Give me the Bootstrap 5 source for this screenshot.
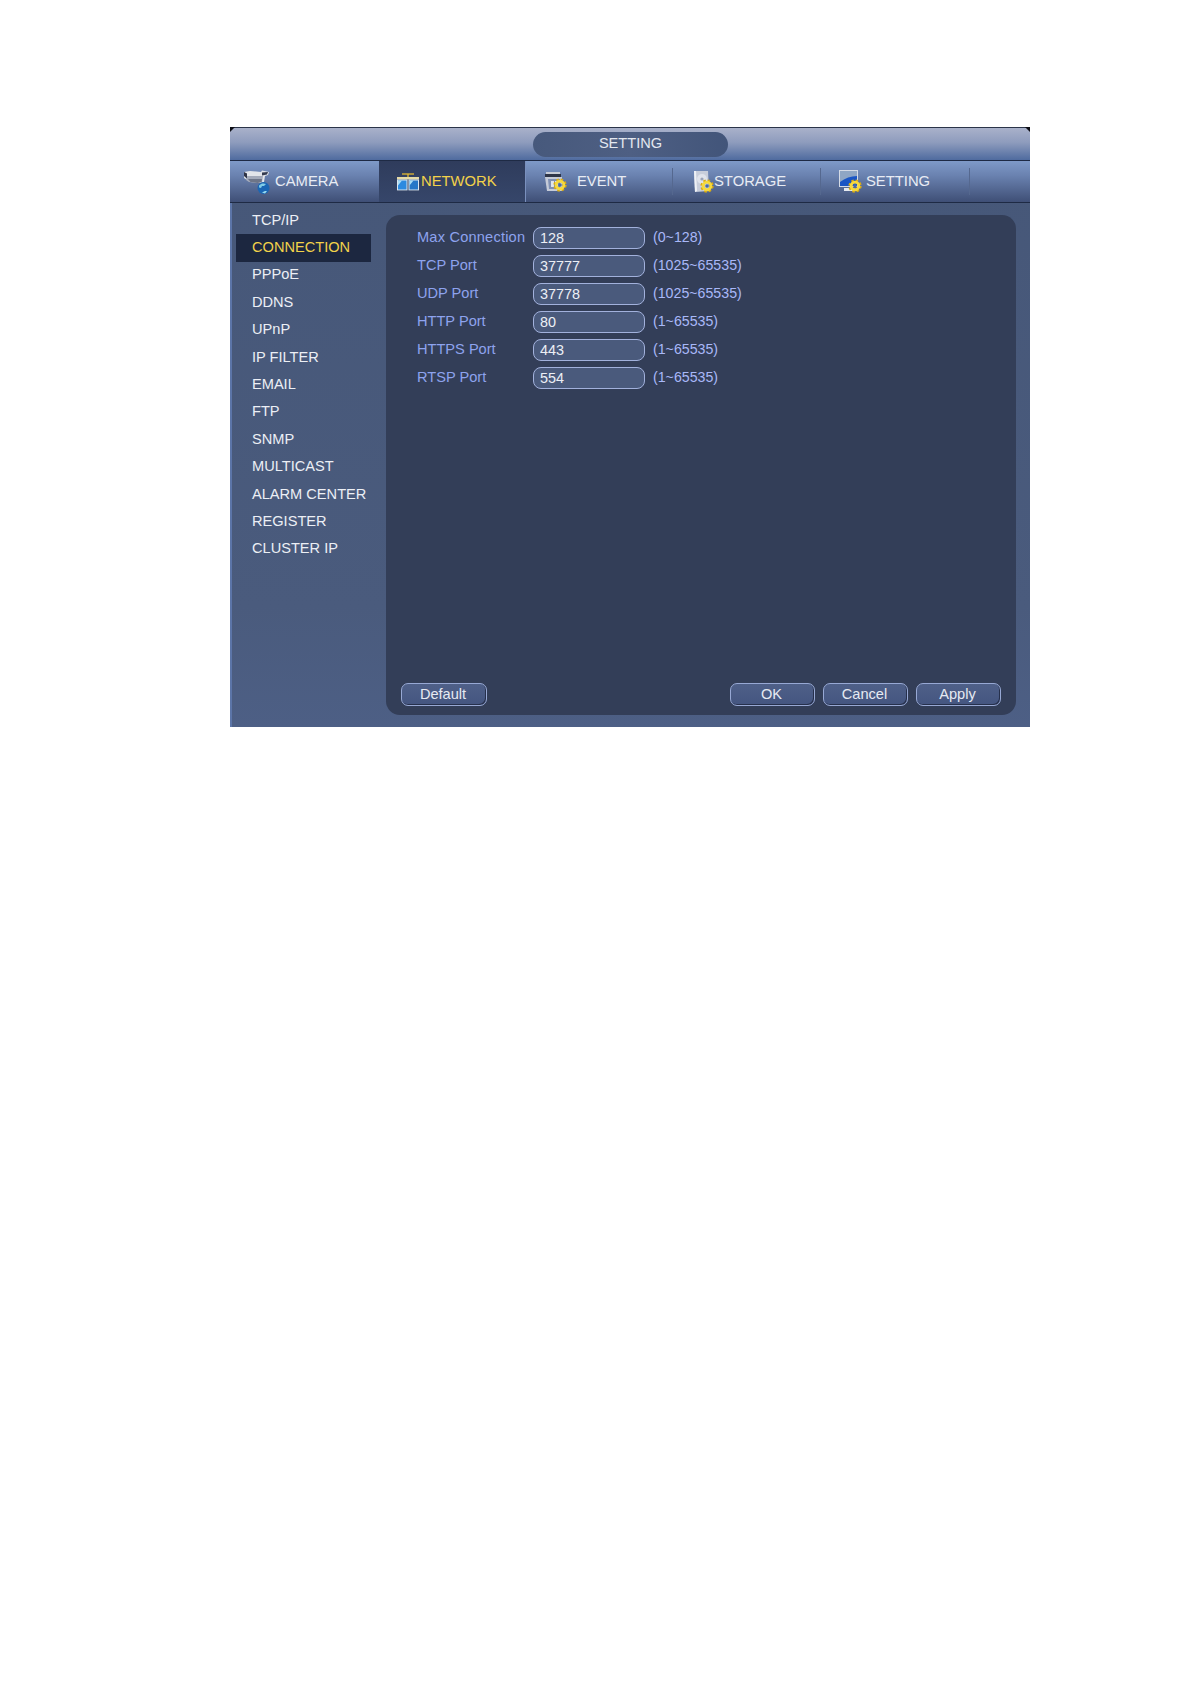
<!DOCTYPE html>
<html lang="en">
<head>
<meta charset="utf-8">
<title>SETTING</title>
<link href="https://cdn.jsdelivr.net/npm/bootstrap@5.3.0/dist/css/bootstrap.min.css" rel="stylesheet">
<style>
html,body{background:#fff;height:100%}
body{font-family:"Liberation Sans",Arial,sans-serif;font-size:14.6px}
.dvr-window{width:800px;margin:127px 0 0 230px;background:linear-gradient(#465778,#4a5b7d 80%,#4d5f85);border-left:2px solid #5c75a8;position:relative}
.dvr-window::before,.dvr-window::after{content:"";position:absolute;top:0;width:5px;height:5px;background:#0d0d14}
.dvr-window::before{left:-2px;clip-path:polygon(0 0,100% 0,0 100%)}
.dvr-window::after{right:0;clip-path:polygon(0 0,100% 0,100% 100%)}
.dvr-head{height:34px;margin-left:-2px;padding-top:4px;border-top:1px solid #2b3448;border-bottom:1px solid #1e2a44;background:linear-gradient(#a9b1ca,#8e9cbd 45%,#4f6b9f)}
.dvr-pill{width:195px;height:25px;border-radius:13px;background:linear-gradient(90deg,#47597c,#4e5f83 50%,#42557a);color:#e4e8f0;line-height:23px;margin-left:303px;text-align:center}
.dvr-tabs{height:42px;margin-left:-2px;border-bottom:1px solid #1e2a44;background:linear-gradient(#7f9ac8,#6a82b0 35%,#3f4f76)}
.dvr-tab{height:41px;color:#e8ecf4;text-decoration:none;white-space:nowrap;font-size:14.8px}
.dvr-tab::after{content:"";width:1px;height:27px;margin-left:auto;background:#55688f}
.dvr-tab.dvr-on{background:linear-gradient(#2f3c5c,#36466a);color:#f2d24a;border-right:1px solid #7a90bd}
.dvr-tab.dvr-on::after,.dvr-tab.tab-a::after{display:none}
.tab-a{width:149px;padding-left:13px;gap:5px}
.tab-b{width:147px;padding-left:18px;gap:2px}
.tab-c{width:147px;padding-left:18px;gap:10px}
.tab-d{width:148px;padding-left:20px;gap:0}
.tab-e{width:149px;padding-left:18px;gap:4px}
.dvr-side{width:154px;padding:3.6px 0 0 4px;flex:none;font-size:14.6px}
.dvr-link{display:block;height:27.4px;width:135px;line-height:27.4px;padding-left:16px;color:#eceff5;text-decoration:none;white-space:nowrap}
.dvr-link.dvr-on{background:#1c2740;color:#f2d24a;height:28px;margin-bottom:-.6px}
.dvr-body{height:524px}
.dvr-panel{width:630px;margin:12px 0;height:500px;background:#333e58;border-radius:14px;padding:12px 15px 9px}
.dvr-rows{gap:6.1px;padding-left:16px}
.dvr-label{width:116px;color:#8ea3ee;white-space:nowrap;line-height:20px;margin-top:-3px}
.dvr-wide{letter-spacing:.2px}
.dvr-input.form-control{width:112px;height:22px;min-height:0;padding:0 6px 1px;border:1.5px solid #a2b1dc;border-radius:8px;background:#4a5a7c;color:#eceff5;font-size:14.4px;line-height:18px;box-shadow:none}
.dvr-range{margin-left:8px;margin-top:-3px;color:#a9b8f8;white-space:nowrap;line-height:20px;font-size:14.2px}
.dvr-btn.btn{width:86px;height:23px;padding:0 2px 2px 0;border:1.5px solid #97a8d4;border-radius:7px;background:linear-gradient(#4f6088,#445580);color:#e6eaf2;font-size:14.6px;line-height:18px;box-shadow:inset -1px -1px 0 #26304c}
.dvr-foot{gap:8px}
.dvr-foot .dvr-btn.btn{width:85px}
</style>
</head>
<body>
<svg width="0" height="0" class="position-absolute">
  <defs>
    <symbol id="gear" viewBox="0 0 16 16">
      <circle cx="8" cy="8" r="5.8" fill="none" stroke="#d9ab14" stroke-width="3.6" stroke-dasharray="2.6 1.95"/>
      <circle cx="8" cy="8" r="4.4" fill="none" stroke="#f6d93c" stroke-width="3.2"/>
      <circle cx="8" cy="8" r="2" fill="#4a6aa0"/>
    </symbol>
  </defs>
</svg>
<main class="dvr-window">
  <header class="dvr-head"><div class="dvr-pill">SETTING</div></header>
  <nav class="dvr-tabs d-flex">
    <a href="#" class="dvr-tab tab-a d-flex align-items-center">
      <svg width="27" height="24" viewBox="0 0 27 24"><path d="M1 2l6-1 11 1 1-1.500 7 1.500-1 3-3 1-1 6-4 1-10-1-6-4z" fill="#e2e5ea"/><path d="M4 6l16 0-1 6-4 1-9-1-3-2z" fill="#a3aaba"/><path d="M5 9l14 0-.5 3-4 1-7-1z" fill="#6d7588"/><path d="M1 2l3 1.500v5L1 6z" fill="#2f3446"/><path d="M19 2.500l6-.5-1 2.500-5 1z" fill="#333a4e"/><circle cx="20.500" cy="18" r="6" fill="#1a66b4"/><path d="M16 15.500c2-2.500 5-2.500 7-1.500l-2 2-2 0-1 2-2-.5z" fill="#7fcbe6"/><path d="M19 22.500l3-1.500 2 0-2 2.500z" fill="#9adcf0"/></svg>
      <span>CAMERA</span>
    </a>
    <a href="#" class="dvr-tab dvr-on tab-b d-flex align-items-center">
      <svg width="22" height="18" viewBox="0 0 22 18"><path d="M5 1h12" stroke="#e2b830" stroke-width="1.3"/><path d="M11 1v4" stroke="#e2b830" stroke-width="1.3"/><path d="M0 4h22v2.400H0z" fill="#e6dba6"/><path d="M0 6.400h10.500v11H0z" fill="#dbe6ee"/><path d="M11.500 6.400H22v11H11.500z" fill="#dbe6ee"/><path d="M1 7.500h8.500v9H1z" fill="#2c8ae0"/><path d="M12.500 7.500H21v9h-8.500z" fill="#2677c8"/><path d="M1 7.500h4l-4 5zM12.500 7.500h4l-4 5z" fill="#a8dcf5"/></svg>
      <span>NETWORK</span>
    </a>
    <a href="#" class="dvr-tab tab-c d-flex align-items-center">
      <svg width="23" height="21" viewBox="0 0 23 21"><path d="M2 1h14v2H2z" fill="#c7ccd6"/><path d="M1 3h16v3H1z" fill="#2e3548"/><path d="M1 6h17v14H3z" fill="#c5cbd8"/><path d="M4 8h12v10H5z" fill="#7f90b4"/><path d="M7 10h3v6H7zM11 10h3v6h-3z" fill="#dfe4ec"/><use href="#gear" x="9" y="7" width="14" height="14"/></svg>
      <span>EVENT</span>
    </a>
    <a href="#" class="dvr-tab tab-d d-flex align-items-center">
      <svg width="21" height="23" viewBox="0 0 21 23"><path d="M1 1h14l1 20-14 1z" fill="#c8cedb"/><path d="M1 1l2 0 1 20-2 1z" fill="#eef1f6"/><circle cx="9" cy="9" r="5" fill="#dfe3ec"/><circle cx="9" cy="9" r="1.600" fill="#9aa4b8"/><use href="#gear" x="7" y="9" width="14" height="14"/></svg>
      <span>STORAGE</span>
    </a>
    <a href="#" class="dvr-tab tab-e d-flex align-items-center">
      <svg width="23" height="23" viewBox="0 0 23 23"><path d="M0 0h19v17H0z" fill="#d5dbe6"/><path d="M1 1h17v15H1z" fill="#1a55c4"/><path d="M1 1h17v5C12 6 6 8 1 12z" fill="#8fa6c4"/><path d="M5 18h10l2 3H5z" fill="#e6eaf0"/><use href="#gear" x="9" y="9" width="14" height="14"/></svg>
      <span>SETTING</span>
    </a>
  </nav>
  <div class="dvr-body d-flex">
    <aside class="dvr-side">
      <a href="#" class="dvr-link">TCP/IP</a>
      <a href="#" class="dvr-link dvr-on">CONNECTION</a>
      <a href="#" class="dvr-link">PPPoE</a>
      <a href="#" class="dvr-link">DDNS</a>
      <a href="#" class="dvr-link">UPnP</a>
      <a href="#" class="dvr-link">IP FILTER</a>
      <a href="#" class="dvr-link">EMAIL</a>
      <a href="#" class="dvr-link">FTP</a>
      <a href="#" class="dvr-link">SNMP</a>
      <a href="#" class="dvr-link">MULTICAST</a>
      <a href="#" class="dvr-link">ALARM CENTER</a>
      <a href="#" class="dvr-link">REGISTER</a>
      <a href="#" class="dvr-link">CLUSTER IP</a>
    </aside>
    <section class="dvr-panel d-flex flex-column justify-content-between">
      <div class="dvr-rows d-flex flex-column">
        <div class="d-flex align-items-center"><label class="dvr-label dvr-wide">Max Connection</label><input class="dvr-input form-control" value="128"><span class="dvr-range">(0~128)</span></div>
        <div class="d-flex align-items-center"><label class="dvr-label">TCP Port</label><input class="dvr-input form-control" value="37777"><span class="dvr-range">(1025~65535)</span></div>
        <div class="d-flex align-items-center"><label class="dvr-label">UDP Port</label><input class="dvr-input form-control" value="37778"><span class="dvr-range">(1025~65535)</span></div>
        <div class="d-flex align-items-center"><label class="dvr-label">HTTP Port</label><input class="dvr-input form-control" value="80"><span class="dvr-range">(1~65535)</span></div>
        <div class="d-flex align-items-center"><label class="dvr-label">HTTPS Port</label><input class="dvr-input form-control" value="443"><span class="dvr-range">(1~65535)</span></div>
        <div class="d-flex align-items-center"><label class="dvr-label">RTSP Port</label><input class="dvr-input form-control" value="554"><span class="dvr-range">(1~65535)</span></div>
      </div>
      <div class="d-flex justify-content-between">
        <button type="button" class="dvr-btn btn">Default</button>
        <div class="dvr-foot d-flex">
          <button type="button" class="dvr-btn btn">OK</button>
          <button type="button" class="dvr-btn btn">Cancel</button>
          <button type="button" class="dvr-btn btn">Apply</button>
        </div>
      </div>
    </section>
  </div>
</main>
<script src="https://cdn.jsdelivr.net/npm/bootstrap@5.3.0/dist/js/bootstrap.bundle.min.js"></script>
</body>
</html>
